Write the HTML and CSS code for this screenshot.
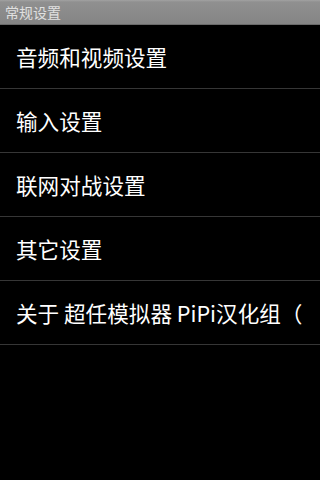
FILE: index.html
```html
<!DOCTYPE html>
<html lang="zh">
<head>
<meta charset="utf-8">
<title>常规设置</title>
<link rel="stylesheet" href="styles.css">
</head>
<body>
<div class="screen">
  <div class="titlebar">常规设置</div>
  <ul class="list">
    <li class="item">音频和视频设置</li>
    <li class="item">输入设置</li>
    <li class="item">联网对战设置</li>
    <li class="item">其它设置</li>
    <li class="item">关于 超任模拟器 PiPi汉化组（</li>
  </ul>
</div>
</body>
</html>
```
FILE: styles.css
```css
html, body {
  margin: 0;
  padding: 0;
  background: #000;
}
.screen {
  width: 320px;
  height: 480px;
  background: #000;
  font-family: "Noto Sans CJK SC", "DejaVu Sans", sans-serif;
  overflow: hidden;
}
.titlebar {
  height: 25px;
  box-sizing: border-box;
  padding-left: 5px;
  font-size: 14px;
  line-height: 24px;
  color: #e0e0e0;
  background: linear-gradient(#a2a2a2 0, #909090 2px, #858585 100%);
  border-bottom: 1px solid #6a6a6a;
}
.list {
  list-style: none;
  margin: 0;
  padding: 0;
}
.item {
  height: 63px;
  border-bottom: 1px solid #363636;
  display: flex;
  align-items: center;
  padding-left: 16px;
  font-size: 21.6px;
  color: #fff;
  white-space: nowrap;
  overflow: hidden;
}
```
